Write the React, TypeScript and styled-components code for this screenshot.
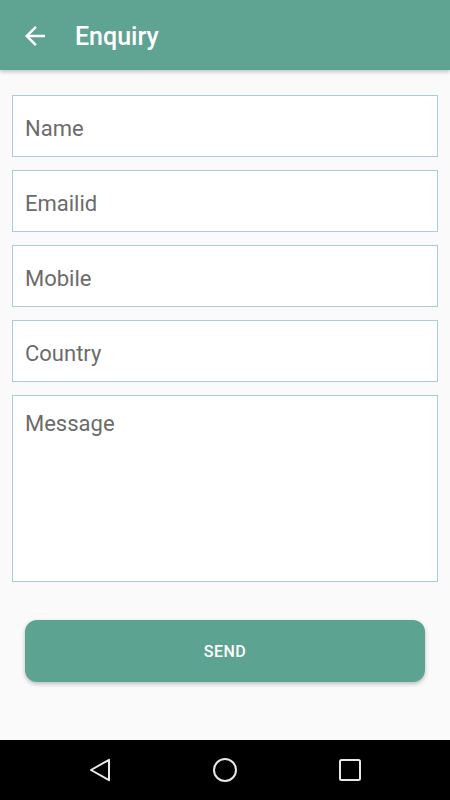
import { styled, createGlobalStyle } from "styled-components";

const GlobalStyle = createGlobalStyle`
  html, body {
    margin: 0;
    padding: 0;
    background: #fafafa;
  }
  * {
    box-sizing: border-box;
  }
`;

const fields = ["Name", "Emailid", "Mobile", "Country"];

const App = () => {
  return (
    <>
      <GlobalStyle />
      <S.Screen>
        <S.Header>
          <S.BackButton aria-label="back">
            <svg width="30" height="30" viewBox="0 0 24 24">
              <path
                d="M20 11H7.83l5.59-5.59L12 4l-8 8 8 8 1.41-1.41L7.83 13H20v-2z"
                fill="#fff"
              />
            </svg>
          </S.BackButton>
          <S.Title>Enquiry</S.Title>
        </S.Header>
        <S.Form>
          {fields.map((field) => (
            <S.Input key={field} placeholder={field} />
          ))}
          <S.TextArea placeholder="Message" />
          <S.SendButton>SEND</S.SendButton>
        </S.Form>
        <S.NavBar>
          <svg width="24" height="24" viewBox="0 0 24 24">
            <path
              d="M21 1.8L3 12l18 10.2z"
              fill="none"
              stroke="#e8e8e8"
              strokeWidth="2"
              strokeLinejoin="round"
            />
          </svg>
          <svg width="24" height="24" viewBox="0 0 24 24">
            <circle cx="12" cy="12" r="11" fill="none" stroke="#e8e8e8" strokeWidth="2" />
          </svg>
          <svg width="24" height="24" viewBox="0 0 24 24">
            <rect x="2" y="2" width="20" height="20" rx="1.5" fill="none" stroke="#e8e8e8" strokeWidth="2" />
          </svg>
        </S.NavBar>
      </S.Screen>
    </>
  );
};

export default App;

const S = {
  Screen: styled.div`
    width: 450px;
    height: 800px;
    display: flex;
    flex-direction: column;
    background: #fafafa;
    font-family: Roboto, "Liberation Sans", sans-serif;
  `,
  Header: styled.div`
    height: 70px;
    flex-shrink: 0;
    display: flex;
    align-items: center;
    background-color: #5fa393;
    box-shadow: 0 2px 4px rgba(0, 0, 0, 0.22);
    padding-left: 20px;
    position: relative;
    z-index: 1;
  `,
  BackButton: styled.div`
    width: 30px;
    height: 30px;
    display: flex;
    margin-top: 1px;
  `,
  Title: styled.div`
    color: #fff;
    font-size: 25px;
    font-weight: 500;
    margin-left: 25px;
    margin-top: 2px;
  `,
  Form: styled.div`
    flex: 1;
    display: flex;
    flex-direction: column;
    gap: 13px;
    padding: 25px 12px 0;
  `,
  Input: styled.input`
    height: 62px;
    width: 100%;
    border: 1.5px solid #a9cdd6;
    background: #fff;
    padding: 4px 12px 0;
    font-family: Roboto, "Liberation Sans", sans-serif;
    font-size: 22px;
    color: #333;
    outline: none;
    &::placeholder {
      color: #6b6b6b;
    }
  `,
  TextArea: styled.textarea`
    height: 187px;
    width: 100%;
    border: 1.5px solid #a9cdd6;
    background: #fff;
    padding: 15px 12px;
    font-family: Roboto, "Liberation Sans", sans-serif;
    font-size: 22px;
    resize: none;
    outline: none;
    &::placeholder {
      color: #6b6b6b;
    }
  `,
  SendButton: styled.button`
    margin: 25px 13px 0;
    height: 62px;
    border: none;
    border-radius: 12px;
    background-color: #5ca391;
    color: #fff;
    font-family: Roboto, "Liberation Sans", sans-serif;
    font-size: 16px;
    font-weight: 500;
    letter-spacing: 0.5px;
    box-shadow: 0 2px 4px rgba(0, 0, 0, 0.25);
  `,
  NavBar: styled.div`
    height: 60px;
    flex-shrink: 0;
    background: #000;
    display: flex;
    align-items: center;
    justify-content: center;
    gap: 101px;
  `,
};
